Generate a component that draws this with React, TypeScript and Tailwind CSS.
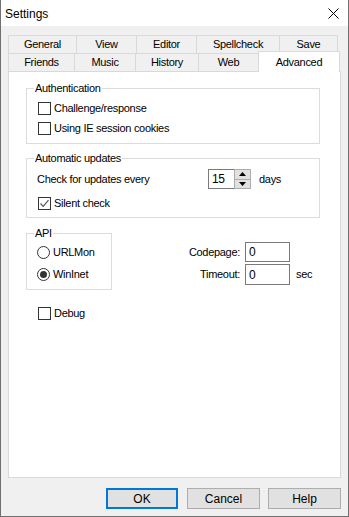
import React from "react";

const font = { fontFamily: '"Liberation Sans", Arial, sans-serif' };

const Check: React.FC<{ checked?: boolean }> = ({ checked }) => (
	<span className="flex w-[13px] h-[13px] shrink-0 items-center justify-center border border-[#333] bg-white">
		{checked && (
			<svg width="11" height="11" viewBox="0 0 11 11">
				<polyline
					points="1.5,5.5 4.2,8.3 9.5,2.2"
					fill="none"
					stroke="#555"
					strokeWidth="1.2"
				/>
			</svg>
		)}
	</span>
);

const Radio: React.FC<{ checked?: boolean }> = ({ checked }) => (
	<span className="flex w-[13px] h-[13px] shrink-0 items-center justify-center rounded-full border border-[#333] bg-white">
		{checked && <span className="w-[7px] h-[7px] rounded-full bg-[#333]" />}
	</span>
);

const Tab: React.FC<{ w: string; label: string; last?: boolean }> = ({
	w,
	label,
	last,
}) => (
	<div
		className={`${w} h-[18px] flex items-center justify-center border-t border-l border-[#d9d9d9] bg-[#f0f0f0] ${
			last ? "border-r" : ""
		}`}
	>
		{label}
	</div>
);

export default function App() {
	return (
		<div
			style={font}
			className="w-[349px] h-[517px] flex flex-col bg-[#f0f0f0] border-x border-b border-[#707070] text-[11px] tracking-[-0.3px] text-black"
		>
			{/* title bar */}
			<div className="h-[26px] flex items-center justify-between bg-white pl-[4px] pr-[9px] pt-[1px]">
				<span className="text-[12px] tracking-normal">Settings</span>
				<svg width="11" height="11" viewBox="0 0 11 11">
					<path d="M0.5 0.5 L10.5 10.5 M10.5 0.5 L0.5 10.5" stroke="#000" strokeWidth="1" />
				</svg>
			</div>

			{/* tabs */}
			<div className="flex ml-[7px] mt-[9px]">
				<Tab w="w-[68px]" label="General" />
				<Tab w="w-[60px]" label="View" />
				<Tab w="w-[60px]" label="Editor" />
				<Tab w="w-[83px]" label="Spellcheck" />
				<Tab w="w-[59px]" label="Save" last />
			</div>
			<div className="flex items-end h-[18px] ml-[7px]">
				<Tab w="w-[66px]" label="Friends" />
				<Tab w="w-[61px]" label="Music" />
				<Tab w="w-[63px]" label="History" />
				<Tab w="w-[60px]" label="Web" />
				<div className="relative top-px z-10 w-[82px] h-[21px] flex justify-center pt-[2px] bg-white border-t border-x border-[#d9d9d9]">
					Advanced
				</div>
			</div>

			{/* panel */}
			<div className="w-[333px] h-[407px] ml-[7px] bg-white border border-[#d9d9d9] pl-[17px] pt-[9px]">
				<fieldset className="w-[294px] border border-[#dcdcdc]">
					<legend className="ml-[7px] px-[1px] leading-[14px]">Authentication</legend>
					<div className="flex flex-col gap-[7px] pl-[11px] pt-[7px] pb-[8px]">
						<label className="flex items-center gap-[3px] leading-[13px]">
							<Check />
							Challenge/response
						</label>
						<label className="flex items-center gap-[3px] leading-[13px]">
							<Check />
							Using IE session cookies
						</label>
					</div>
				</fieldset>

				<fieldset className="w-[294px] mt-[7px] border border-[#dcdcdc]">
					<legend className="ml-[7px] px-[1px] leading-[14px]">Automatic updates</legend>
					<div className="flex items-center h-[20px] mt-[4px] pl-[10px]">
						<span className="w-[171px]">Check for updates every</span>
						<div className="flex h-[20px]">
							<div className="w-[26px] flex items-center pl-[3px] border-y border-l border-[#7a7a7a] bg-white text-[12px]">
								15
							</div>
							<div className="w-[17px] flex flex-col border border-[#adadad] bg-[#e1e1e1]">
								<div className="flex-1 flex items-center justify-center border-b border-[#adadad]">
									<svg width="7" height="4" viewBox="0 0 7 4">
										<path d="M3.5 0 L7 4 L0 4 Z" fill="#000" />
									</svg>
								</div>
								<div className="flex-1 flex items-center justify-center">
									<svg width="7" height="4" viewBox="0 0 7 4">
										<path d="M0 0 L7 0 L3.5 4 Z" fill="#000" />
									</svg>
								</div>
							</div>
						</div>
						<span className="ml-[8px]">days</span>
					</div>
					<label className="flex items-center gap-[3px] leading-[13px] pl-[11px] mt-[8px] pb-[7px]">
						<Check checked />
						Silent check
					</label>
				</fieldset>

				<div className="flex mt-[8px]">
					<fieldset className="w-[86px] border border-[#dcdcdc]">
						<legend className="ml-[7px] px-[1px] leading-[14px]">API</legend>
						<div className="flex flex-col gap-[9px] pl-[10px] pt-[6px] pb-[8px]">
							<label className="flex items-center gap-[3px] leading-[13px]">
								<Radio />
								URLMon
							</label>
							<label className="flex items-center gap-[3px] leading-[13px]">
								<Radio checked />
								WinInet
							</label>
						</div>
					</fieldset>

					<div className="ml-[76px] mt-[16px] flex flex-col gap-[2px]">
						<div className="flex items-center">
							<span className="w-[52px] text-right">Codepage:</span>
							<div className="ml-[5px] w-[45px] h-[20px] flex items-center pl-[3px] border border-[#7a7a7a] text-[12px]">
								0
							</div>
						</div>
						<div className="flex items-center">
							<span className="w-[52px] text-right">Timeout:</span>
							<div className="ml-[5px] w-[45px] h-[21px] flex items-center pl-[3px] border border-[#7a7a7a] text-[12px]">
								0
							</div>
							<span className="ml-[6px]">sec</span>
						</div>
					</div>
				</div>

				<label className="flex items-center gap-[3px] leading-[13px] ml-[12px] mt-[17px]">
					<Check />
					Debug
				</label>
			</div>

			{/* buttons */}
			<div className="flex justify-end gap-[8px] mt-[10px] pr-[7px]">
				<button className="w-[72px] h-[21px] mr-px border-2 border-[#0078d7] bg-[#e1e1e1] text-[12px] tracking-normal">
					OK
				</button>
				<button className="w-[73px] h-[21px] border border-[#adadad] bg-[#e1e1e1] text-[12px] tracking-normal">
					Cancel
				</button>
				<button className="w-[73px] h-[21px] border border-[#adadad] bg-[#e1e1e1] text-[12px] tracking-normal">
					Help
				</button>
			</div>
		</div>
	);
}
